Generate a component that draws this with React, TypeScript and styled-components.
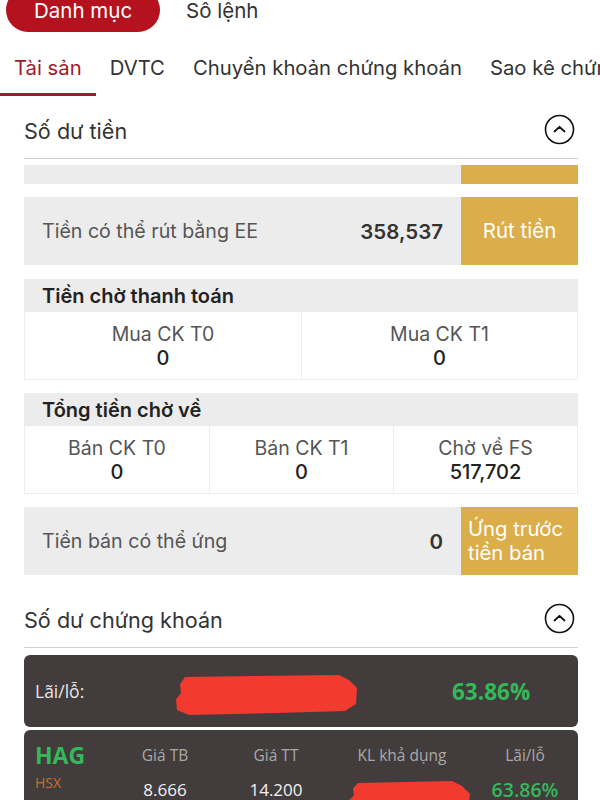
import React from 'react';
import styled, { createGlobalStyle } from 'styled-components';

const GlobalStyle = createGlobalStyle`
  html, body {
    margin: 0;
    padding: 0;
    background: #ffffff;
    font-family: Inter, "Noto Sans", "Liberation Sans", sans-serif;
    overflow: hidden;
  }
  * { box-sizing: border-box; }
`;

const Page = styled.div`
  width: 600px;
  height: 800px;
  overflow: hidden;
  background: #ffffff;
`;

const TopBar = styled.div`
  display: flex;
  align-items: center;
  height: 44px;
  margin-top: -12px;
  padding-left: 6px;
  gap: 26px;
`;

const Pill = styled.div`
  height: 44px;
  padding: 0 28px;
  border-radius: 22px;
  background: #b3121e;
  color: #ffffff;
  font-size: 20.5px;
  line-height: 21px;
  display: flex;
  align-items: center;
`;

const TopLink = styled.div`
  color: #333333;
  font-size: 20.5px;
  line-height: 21px;
`;

const Tabs = styled.div`
  display: flex;
  height: 64px;
  white-space: nowrap;
  overflow: hidden;
`;

const Tab = styled.div<{ active?: boolean }>`
  display: flex;
  align-items: center;
  padding: 9px 14px 0;
  font-size: 20.3px;
  color: ${p => (p.active ? '#9d1c2b' : '#333333')};
  border-bottom: 3px solid ${p => (p.active ? '#9d1c2b' : 'transparent')};
  flex-shrink: 0;
`;

const Content = styled.div`
  padding: 0 22px 0 24px;
`;

const SectionHeader = styled.div<{ gapTop?: number }>`
  display: flex;
  align-items: center;
  justify-content: space-between;
  height: 58px;
  margin-top: ${p => p.gapTop ?? 5}px;
  border-bottom: 1.5px solid #cfcfcf;
  padding-right: 3px;
`;

const SectionTitle = styled.div`
  font-size: 21.6px;
  color: #333333;
  padding-top: 2px;
`;

const GrayRow = styled.div<{ height: number; gapTop: number }>`
  display: flex;
  height: ${p => p.height}px;
  margin-top: ${p => p.gapTop}px;
  background: #ececec;
`;

const RowLabel = styled.div`
  flex: 1;
  display: flex;
  align-items: center;
  padding-left: 18px;
  font-size: 19.6px;
  color: #555555;
`;

const RowValue = styled.div`
  display: flex;
  align-items: center;
  padding-right: 18px;
  font-size: 20.5px;
  font-weight: 600;
  color: #333333;
`;

const GoldButton = styled.div<{ multiline?: boolean }>`
  width: 117px;
  display: flex;
  align-items: center;
  justify-content: ${p => (p.multiline ? 'flex-start' : 'center')};
  padding-left: ${p => (p.multiline ? '7px' : '0')};
  background: #dcad4b;
  color: #ffffff;
  font-size: ${p => (p.multiline ? '20.3px' : '20.5px')};
  line-height: 24px;
`;

const Box = styled.div<{ gapTop: number }>`
  margin-top: ${p => p.gapTop}px;
`;

const BoxHeader = styled.div`
  height: 33px;
  display: flex;
  align-items: center;
  padding-left: 18px;
  background: #ececec;
  font-size: 20px;
  font-weight: 600;
  color: #222222;
`;

const Cells = styled.div<{ cols: number }>`
  display: grid;
  grid-template-columns: repeat(${p => p.cols}, 1fr);
  border: 1px solid #eeeeee;
  border-top: none;
`;

const Cell = styled.div`
  height: 67px;
  display: flex;
  flex-direction: column;
  align-items: center;
  justify-content: center;
  border-left: 1px solid #eeeeee;
  &:first-child { border-left: none; }
`;

const CellLabel = styled.div`
  font-size: 19.5px;
  color: #555555;
  line-height: 24px;
`;

const CellValue = styled.div`
  font-size: 20px;
  font-weight: 500;
  color: #222222;
  line-height: 24px;
`;

const DarkCard = styled.div<{ gapTop: number }>`
  margin-top: ${p => p.gapTop}px;
  background: #433c3c;
  border-radius: 6px;
  font-family: "Open Sans", "Noto Sans", sans-serif;
`;

const SummaryCard = styled(DarkCard)`
  height: 72px;
  display: flex;
  align-items: center;
  padding-left: 11px;
`;

const SummaryLabel = styled.div`
  width: 140px;
  font-size: 17.5px;
  color: #e6e6e6;
`;

const GreenText = styled.div<{ size: number; weight: number }>`
  color: #34b85a;
  font-size: ${p => p.size}px;
  font-weight: ${p => p.weight};
`;

const StockCard = styled(DarkCard)`
  height: 90px;
  display: grid;
  grid-template-columns: 85px 112px 110px 142px 104px;
  grid-template-rows: 50px 18px;
  border-bottom-left-radius: 0;
  border-bottom-right-radius: 0;
`;

const Ticker = styled.div`
  grid-row: span 2;
  padding-left: 11px;
  display: flex;
  flex-direction: column;
  padding-top: 10px;
`;

const TickerName = styled.div`
  font-size: 23px;
  font-weight: 700;
  color: #34b85a;
  line-height: 30px;
`;

const Exchange = styled.div`
  font-size: 14px;
  color: #c8702b;
  line-height: 18px;
  margin-top: 4px;
`;

const ColHead = styled.div`
  display: flex;
  align-items: center;
  justify-content: center;
  font-size: 15.5px;
  color: #a9a9a9;
`;

const ColValue = styled.div<{ shift?: number }>`
  display: flex;
  align-items: center;
  justify-content: center;
  font-size: 17px;
  color: #f2f2f2;
  margin-left: ${p => p.shift ?? 0}px;
`;

const Redact = styled.svg<{ drop?: number }>`
  display: block;
  flex-shrink: 0;
  margin-top: ${p => p.drop ?? 0}px;
`;

const ChevronCircle = () => (
  <svg width="31" height="31" viewBox="0 0 31 31">
    <circle cx="15.5" cy="15.5" r="14" fill="none" stroke="#111" strokeWidth="1.6" />
    <path d="M10.5 17.5 L15.5 12.8 L20.5 17.5" fill="none" stroke="#111" strokeWidth="1.8" strokeLinecap="round" strokeLinejoin="round" />
  </svg>
);

const Scribble = ({ w, h, drop }: { w: number; h: number; drop?: number }) => (
  <Redact width={w} height={h} viewBox={`0 0 ${w} ${h}`} drop={drop}>
    <path
      d={`M10 3 L${w - 20} 1 L${w - 10} 6 L${w - 2} 14 L${w - 3} ${h - 12} L${w - 14} ${h - 5} L${w * 0.55} ${h - 3} L14 ${h - 1} L2 ${h - 6} L1 ${h * 0.6} L6 ${h * 0.45} L5 ${h * 0.25} Z`}
      fill="#f23a2f"
    />
  </Redact>
);

export default function App() {
  return (
    <Page>
      <GlobalStyle />
      <TopBar>
        <Pill>Danh mục</Pill>
        <TopLink>Sô lệnh</TopLink>
      </TopBar>
      <Tabs>
        <Tab active>Tài sản</Tab>
        <Tab>DVTC</Tab>
        <Tab>Chuyển khoản chứng khoán</Tab>
        <Tab>Sao kê chứng khoán</Tab>
      </Tabs>
      <Content>
        <SectionHeader>
          <SectionTitle>Số dư tiền</SectionTitle>
          <ChevronCircle />
        </SectionHeader>

        <GrayRow height={19} gapTop={6}>
          <RowLabel />
          <GoldButton />
        </GrayRow>

        <GrayRow height={68} gapTop={13}>
          <RowLabel>Tiền có thể rút bằng EE</RowLabel>
          <RowValue>358,537</RowValue>
          <GoldButton>Rút tiền</GoldButton>
        </GrayRow>

        <Box gapTop={14}>
          <BoxHeader>Tiền chờ thanh toán</BoxHeader>
          <Cells cols={2}>
            <Cell>
              <CellLabel>Mua CK T0</CellLabel>
              <CellValue>0</CellValue>
            </Cell>
            <Cell>
              <CellLabel>Mua CK T1</CellLabel>
              <CellValue>0</CellValue>
            </Cell>
          </Cells>
        </Box>

        <Box gapTop={13}>
          <BoxHeader>Tổng tiền chờ về</BoxHeader>
          <Cells cols={3}>
            <Cell>
              <CellLabel>Bán CK T0</CellLabel>
              <CellValue>0</CellValue>
            </Cell>
            <Cell>
              <CellLabel>Bán CK T1</CellLabel>
              <CellValue>0</CellValue>
            </Cell>
            <Cell>
              <CellLabel>Chờ về FS</CellLabel>
              <CellValue>517,702</CellValue>
            </Cell>
          </Cells>
        </Box>

        <GrayRow height={68} gapTop={13}>
          <RowLabel>Tiền bán có thể ứng</RowLabel>
          <RowValue>0</RowValue>
          <GoldButton multiline>
            Ứng trước
            <br />
            tiền bán
          </GoldButton>
        </GrayRow>

        <SectionHeader gapTop={15}>
          <SectionTitle>Số dư chứng khoán</SectionTitle>
          <ChevronCircle />
        </SectionHeader>

        <SummaryCard gapTop={7}>
          <SummaryLabel>Lãi/lỗ:</SummaryLabel>
          <Scribble w={184} h={42} drop={8} />
          <GreenText size={22.5} weight={700} style={{ marginLeft: 93 }}>63.86%</GreenText>
        </SummaryCard>

        <StockCard gapTop={3}>
          <Ticker>
            <TickerName>HAG</TickerName>
            <Exchange>HSX</Exchange>
          </Ticker>
          <ColHead>Giá TB</ColHead>
          <ColHead>Giá TT</ColHead>
          <ColHead>KL khả dụng</ColHead>
          <ColHead>Lãi/lỗ</ColHead>
          <ColValue>8.666</ColValue>
          <ColValue>14.200</ColValue>
          <ColValue shift={16}>
            <Scribble w={124} h={34} drop={16} />
          </ColValue>
          <ColValue>
            <GreenText size={19.5} weight={600}>63.86%</GreenText>
          </ColValue>
        </StockCard>
      </Content>
    </Page>
  );
}
